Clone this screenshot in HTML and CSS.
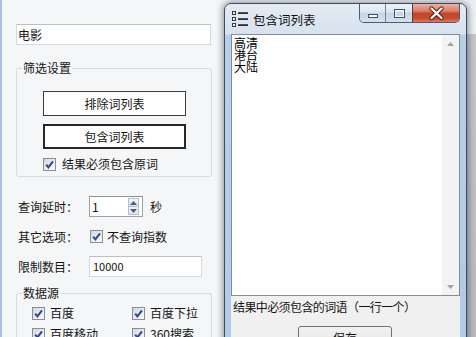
FILE: index.html
```html
<!DOCTYPE html>
<html lang="zh-CN">
<head>
<meta charset="utf-8">
<title>包含词列表</title>
<link rel="stylesheet" href="styles.css">
</head>
<body>
<div class="desktop">
  <div class="main">
    <div class="textbox keyword">电影</div>

    <div class="group g1">
      <div class="group-title">筛选设置</div>
      <div class="btn">排除词列表</div>
      <div class="btn focus">包含词列表</div>
      <div class="check"><span class="cb"><svg viewBox="0 0 11 11" width="11" height="11"><path d="M2.2 5.6 L4.4 8.4 L9 2.4" fill="none" stroke="#30478a" stroke-width="2"/></svg></span>结果必须包含原词</div>
    </div>

    <div class="form">
      <div class="row">
        <span class="lbl">查询延时：</span>
        <div class="spin">
          <span class="spin-val">1</span>
          <div class="spin-btns">
            <span class="sbtn"><svg width="7" height="4" viewBox="0 0 7 4"><path d="M0 4 L3.5 0 L7 4Z" fill="#4b5d80"/></svg></span>
            <span class="sbtn"><svg width="7" height="4" viewBox="0 0 7 4"><path d="M0 0 L3.5 4 L7 0Z" fill="#4b5d80"/></svg></span>
          </div>
        </div>
        <span class="unit">秒</span>
      </div>
      <div class="row">
        <span class="lbl">其它选项：</span>
        <div class="check inline"><span class="cb"><svg viewBox="0 0 11 11" width="11" height="11"><path d="M2.2 5.6 L4.4 8.4 L9 2.4" fill="none" stroke="#30478a" stroke-width="2"/></svg></span>不查询指数</div>
      </div>
      <div class="row">
        <span class="lbl">限制数目：</span>
        <div class="textbox num">10000</div>
      </div>
    </div>

    <div class="group g2">
      <div class="group-title">数据源</div>
      <div class="sources">
        <div class="check"><span class="cb"><svg viewBox="0 0 11 11" width="11" height="11"><path d="M2.2 5.6 L4.4 8.4 L9 2.4" fill="none" stroke="#30478a" stroke-width="2"/></svg></span>百度</div>
        <div class="check"><span class="cb"><svg viewBox="0 0 11 11" width="11" height="11"><path d="M2.2 5.6 L4.4 8.4 L9 2.4" fill="none" stroke="#30478a" stroke-width="2"/></svg></span>百度下拉</div>
        <div class="check"><span class="cb"><svg viewBox="0 0 11 11" width="11" height="11"><path d="M2.2 5.6 L4.4 8.4 L9 2.4" fill="none" stroke="#30478a" stroke-width="2"/></svg></span>百度移动</div>
        <div class="check"><span class="cb"><svg viewBox="0 0 11 11" width="11" height="11"><path d="M2.2 5.6 L4.4 8.4 L9 2.4" fill="none" stroke="#30478a" stroke-width="2"/></svg></span>360搜索</div>
      </div>
    </div>
  </div>
  <div class="strip"></div>

  <div class="dialog">
    <div class="titlebar">
      <svg class="ticon" width="16" height="16" viewBox="0 0 16 16">
        <rect x="0.5" y="0.5" width="3" height="3" fill="#e8eef5" stroke="#3a3a3a"/>
        <rect x="0.5" y="6.5" width="3" height="3" fill="#e8eef5" stroke="#3a3a3a"/>
        <rect x="0.5" y="12.5" width="3" height="3" fill="#e8eef5" stroke="#3a3a3a"/>
        <rect x="6" y="1.2" width="10" height="1.8" fill="#2e2e2e"/>
        <rect x="6" y="7.2" width="10" height="1.8" fill="#2e2e2e"/>
        <rect x="6" y="13.2" width="10" height="1.8" fill="#2e2e2e"/>
      </svg>
      <span class="ttext">包含词列表</span>
      <div class="caption-btns">
        <span class="cap min"><svg width="26" height="19" viewBox="0 0 26 19"><rect x="8.5" y="10.5" width="9" height="3" fill="#fdfdfd" stroke="#3f4f66"/></svg></span>
        <span class="cap max"><svg width="27" height="19" viewBox="0 0 27 19"><rect x="8.5" y="5.5" width="10" height="8" fill="none" stroke="#3f4f66"/><rect x="9.5" y="6.5" width="8" height="6" fill="none" stroke="#f4f7fb"/><rect x="10.5" y="8.5" width="6" height="3" fill="#c9d5e4"/></svg></span>
        <span class="cap close"><svg width="47" height="19" viewBox="0 0 47 19"><path d="M18.5 4.5 L28.5 14 M28.5 4.5 L18.5 14" stroke="#5a1d12" stroke-width="4.4" stroke-linecap="round"/><path d="M18.5 4.5 L28.5 14 M28.5 4.5 L18.5 14" stroke="#ffffff" stroke-width="2.4" stroke-linecap="round"/></svg></span>
      </div>
    </div>
    <div class="client">
      <div class="listbox">
        <div class="lines">
          <div>高清</div>
          <div>港台</div>
          <div>大陆</div>
        </div>
        <div class="vscroll">
          <span class="arrow"><svg width="7" height="4" viewBox="0 0 7 4"><path d="M0 4 L3.5 0 L7 4Z" fill="#a3a3a3"/></svg></span>
          <span class="arrow"><svg width="7" height="4" viewBox="0 0 7 4"><path d="M0 0 L3.5 4 L7 0Z" fill="#a3a3a3"/></svg></span>
        </div>
      </div>
      <div class="hint">结果中必须包含的词语（一行一个）</div>
      <div class="save">保存</div>
    </div>
  </div>
</div>
</body>
</html>
```

FILE: styles.css
```css
* { box-sizing: border-box; }
html, body { margin: 0; padding: 0; }
body {
  font-family: "Noto Sans CJK SC", "Noto Sans", sans-serif;
  font-size: 12px;
  color: #141414;
  background: #f5f6f8;
}
.desktop {
  position: relative;
  width: 476px;
  height: 337px;
  overflow: hidden;
  display: flex;
}
.main {
  width: 467px;
  height: 337px;
  background: #f5f6f8;
  border-left: 2px solid #a9c2dd;
  padding: 24px 0 0 14px;
}
.strip {
  flex: 1;
  background: linear-gradient(to bottom, #eef1f4 0, #eef1f4 34px, #c4c8cd 34px, #b9bdc2 100%);
}
.textbox {
  background: #fff;
  border: 1px solid #d3dae1;
  border-top-color: #b9c0c8;
  height: 21px;
  line-height: 19px;
  padding-left: 1px;
}
.keyword { width: 195px; }

.group {
  width: 196px;
  border: 1px solid #d4dde4;
  border-radius: 3px;
  padding-bottom: 5px;
}
.g1 { margin-top: 23px; }
.g2 { margin-top: 16px; height: 60px; border-bottom: none; }
.group-title {
  width: max-content;
  margin: -8px 0 0 5px;
  padding: 0 1px;
  line-height: 14px;
  background: #f5f6f8;
}
.btn {
  width: 143px;
  height: 25px;
  margin: 16px 0 0 26px;
  border: 1px solid #3a3a3a;
  background: #fff;
  text-align: center;
  line-height: 23px;
}
.btn.focus {
  margin-top: 8px;
  border: 2px solid #262626;
  line-height: 21px;
}
.check {
  display: flex;
  align-items: center;
  gap: 6px;
  height: 14px;
  line-height: 14px;
  white-space: nowrap;
}
.g1 .check { margin: 8px 0 0 26px; }
.check.inline { margin-left: 1px; gap: 4px; }
.cb {
  width: 13px;
  height: 13px;
  border: 1px solid #8c8e92;
  background: linear-gradient(135deg, #cfd6de 0%, #e9edf1 55%, #f8f9fa 100%);
  display: flex;
  align-items: center;
  justify-content: center;
  flex: none;
}
.cb svg { display: block; }

.form {
  margin-top: 19px;
  display: flex;
  flex-direction: column;
  gap: 9px;
}
.row {
  display: flex;
  align-items: center;
  height: 21px;
}
.lbl {
  width: 73px;
  padding-left: 2px;
  flex: none;
}
.spin {
  width: 54px;
  height: 21px;
  border: 1px solid #9ba1aa;
  border-top-color: #8a9099;
  background: #fff;
  display: flex;
}
.spin-val {
  flex: 1;
  padding-left: 2px;
  line-height: 19px;
}
.spin-btns {
  width: 11px;
  margin: 1px 3px 1px 0;
  display: flex;
  flex-direction: column;
}
.sbtn {
  flex: 1;
  border: 1px solid #b3bfcc;
  background: linear-gradient(#f3f6f9, #dde5ee);
  display: flex;
  align-items: center;
  justify-content: center;
}
.sbtn + .sbtn { border-top: none; }
.sbtn svg { display: block; }
.unit { margin-left: 7px; }
.num {
  width: 113px;
  padding-left: 3px;
  font-size: 11px;
}

.sources {
  margin: 6px 0 0 15px;
  display: grid;
  grid-template-columns: 100px auto;
  row-gap: 7px;
}
.sources .check { gap: 5px; }

/* dialog window */
.dialog {
  position: absolute;
  left: 224px;
  top: 3px;
  width: 243px;
  height: 350px;
  border: 1px solid #3a4c63;
  border-radius: 7px 7px 0 0;
  background: linear-gradient(to bottom, #e4ebf3 0, #d6e2ef 30px, #b8cfe8 31px, #b2cbe6 100%);
  box-shadow: 0 0 7px 1px rgba(0, 0, 0, 0.45);
  display: flex;
  flex-direction: column;
}
.titlebar {
  height: 30px;
  display: flex;
  align-items: center;
  padding: 0 6px 0 7px;
  flex: none;
}
.ticon { display: block; margin-right: 5px; flex: none; }
.ttext { font-size: 12.5px; color: #111; }
.caption-btns {
  margin-left: auto;
  align-self: flex-start;
  display: flex;
  height: 19px;
  border: 1px solid #4b5b72;
  border-top: none;
  border-radius: 0 0 5px 5px;
  overflow: hidden;
}
.cap { display: block; height: 18px; }
.cap svg { display: block; }
.min, .max {
  background: linear-gradient(#eef3f9 0%, #dbe5f1 45%, #c5d5e8 50%, #d3e0ee 100%);
}
.min { width: 26px; border-right: 1px solid #6f819a; }
.max { width: 27px; border-right: 1px solid #5b3a36; }
.close {
  width: 46px;
  background: linear-gradient(#eab3a6 0%, #d97c66 40%, #c4452b 52%, #c94a30 80%, #e07a5e 100%);
}
.client {
  flex: 1;
  margin: 0 6px;
  background: #f0f0f0;
  display: flex;
  flex-direction: column;
}
.listbox {
  height: 262px;
  border: 1px solid #848c98;
  background: #fff;
  display: flex;
  flex: none;
}
.lines {
  flex: 1;
  padding: 2px 0 0 2px;
  line-height: 12px;
  font-size: 12px;
  color: #000;
}
.vscroll {
  width: 17px;
  background: #f3f3f3;
  display: flex;
  flex-direction: column;
  justify-content: space-between;
}
.arrow {
  height: 17px;
  display: flex;
  align-items: center;
  justify-content: center;
}
.arrow svg { display: block; }
.hint {
  margin-top: 4px;
  padding-left: 2px;
  line-height: 14px;
  letter-spacing: -0.6px;
  white-space: nowrap;
}
.save {
  width: 94px;
  height: 23px;
  margin: 12px 0 0 67px;
  border: 1px solid #707070;
  border-radius: 3px;
  background: linear-gradient(#f2f2f2 0%, #ebebeb 50%, #dddddd 51%, #cfcfcf 100%);
  text-align: center;
  line-height: 21px;
}
```
